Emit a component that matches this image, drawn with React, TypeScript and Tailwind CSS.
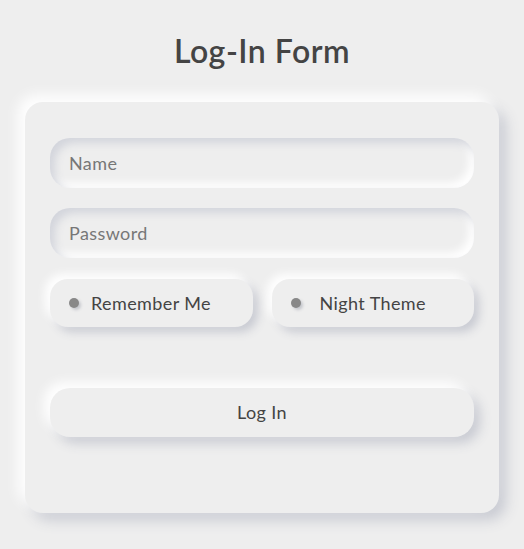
export default function App() {
  return (
    <div className="min-h-screen bg-[#eeeeee] pt-[30px] font-['Lato','Noto_Sans',sans-serif]">
      <h1 className="text-center text-[32px] font-semibold leading-[42px] tracking-[0.5px] text-[#444]">
        Log-In Form
      </h1>

      <form
        className="mx-auto mt-[30px] w-[474px] rounded-[18px] bg-[#eeeeee] px-[25px] pt-[36px] pb-[76px] shadow-[-7px_-7px_14px_#ffffff,7px_7px_14px_#c8cad2]"
        onSubmit={(e) => e.preventDefault()}
      >
        <input
          type="text"
          placeholder="Name"
          className="block h-[50px] w-full rounded-[20px] bg-[#eeeeee] px-[19px] text-[18px] tracking-[0.4px] text-[#555] placeholder:text-[#777] outline-none shadow-[inset_5px_5px_9px_#d3d5dc,inset_-5px_-5px_9px_#ffffff]"
        />
        <input
          type="password"
          placeholder="Password"
          className="mt-[20px] block h-[50px] w-full rounded-[20px] bg-[#eeeeee] px-[19px] text-[18px] tracking-[0.4px] text-[#555] placeholder:text-[#777] outline-none shadow-[inset_5px_5px_9px_#d3d5dc,inset_-5px_-5px_9px_#ffffff]"
        />

        <div className="mt-[21px] flex gap-[19px]">
          <label className="flex h-[48px] flex-1 cursor-pointer items-center rounded-[18px] bg-[#eeeeee] pl-[19px] shadow-[-5px_-5px_10px_#ffffff,5px_5px_10px_#c8cad2]">
            <span className="h-[10px] w-[10px] rounded-full bg-[#888] shadow-[2px_2px_3px_#c4c6cc]" />
            <span className="ml-[12px] text-[18px] tracking-[0.4px] text-[#444]">Remember Me</span>
          </label>
          <label className="flex h-[48px] flex-1 cursor-pointer items-center rounded-[18px] bg-[#eeeeee] pl-[19px] shadow-[-5px_-5px_10px_#ffffff,5px_5px_10px_#c8cad2]">
            <span className="h-[10px] w-[10px] rounded-full bg-[#888] shadow-[2px_2px_3px_#c4c6cc]" />
            <span className="ml-[19px] text-[18px] tracking-[0.4px] text-[#444]">Night Theme</span>
          </label>
        </div>

        <button
          type="submit"
          className="mt-[61px] block h-[49px] w-full rounded-[20px] bg-[#eeeeee] text-[18px] tracking-[0.4px] text-[#444] shadow-[-6px_-6px_12px_#ffffff,6px_6px_12px_#c8cad2]"
        >
          Log In
        </button>
      </form>
    </div>
  );
}
